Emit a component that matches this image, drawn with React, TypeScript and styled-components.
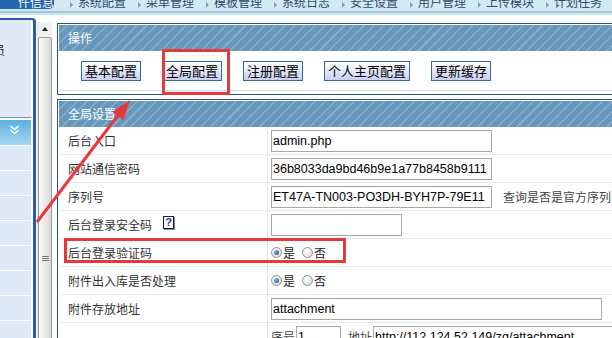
import React from 'react';
import styled, { createGlobalStyle, css } from 'styled-components';

const GlobalStyle = createGlobalStyle`
  html, body {
    margin: 0;
    padding: 0;
    background: #fff;
  }
  body {
    font-family: "Noto Sans CJK SC", "Liberation Sans", sans-serif;
  }
`;

const cjk = `"Noto Sans CJK SC", "Liberation Sans", sans-serif`;
const latin = `"Liberation Sans", Arial, sans-serif`;

const Page = styled.div`
  position: relative;
  width: 612px;
  height: 338px;
  overflow: hidden;
  background: #fff;
`;

const TopNav = styled.div`
  display: flex;
  height: 11px;
  background: #d5e9f2;
  border-bottom: 2px solid #9bcadf;
  overflow: hidden;
`;

const NavRule = styled.div`
  height: 2px;
  background: #cce5ef;
`;

const ActiveTab = styled.div`
  width: 54px;
  height: 9px;
  flex: none;
  background: #2467ae;
  border-bottom-right-radius: 5px;
  overflow: hidden;
  padding-left: 18px;
  box-sizing: border-box;
  color: #fff;
  font: 12px/12px ${cjk};
`;

const ClippedText = styled.div`
  margin-top: -4px;
  white-space: nowrap;
`;

const NavList = styled.div`
  display: flex;
  margin-left: 16px;
`;

const NavItem = styled.div`
  display: flex;
  align-items: flex-start;
  margin-right: 12px;
  color: #2d4c6b;
  font: 12px/12px ${cjk};
  white-space: nowrap;

  &::before {
    content: '';
    width: 0;
    height: 0;
    margin: 2px 5px 0 0;
    border-left: 3px solid #7d9db8;
    border-top: 3px solid transparent;
    border-bottom: 3px solid transparent;
  }
`;

const Body = styled.div`
  display: flex;
  align-items: flex-start;
`;

const Sidebar = styled.div`
  width: 36px;
  height: 330px;
  flex: none;
  margin-top: 3px;
  box-sizing: border-box;
  border-top: 2px solid #2a5ca8;
  border-right: 3px solid #2a5ca8;
  border-top-right-radius: 4px;
  padding-right: 2px;
  background: #fff;
`;

const SideTop = styled.div`
  height: 98px;
  padding-top: 23px;
  box-sizing: border-box;
  background: #dfeaf6;
  border-bottom: 1px solid #7396bd;
  overflow: hidden;
  font: 12px/14px ${cjk};
  color: #222;
`;

const SideTopText = styled.span`
  display: block;
  margin-left: -7px;
`;

const SideHeader = styled.div`
  height: 26px;
  margin-top: 2px;
  display: flex;
  align-items: flex-start;
  padding: 5px 0 0 9px;
  box-sizing: border-box;
  background: linear-gradient(#5cb1e3, #a6d6f1);
  border-bottom: 1px solid #fff;
`;

const SideRow = styled.div`
  height: 24px;
  background: #dde9f6;
  border-bottom: 1px solid #fff;
`;

const ScrollTrack = styled.div`
  width: 15px;
  height: 320px;
  flex: none;
  margin: 7px 0 0 1px;
  box-sizing: border-box;
  display: flex;
  flex-direction: column;
  background: #f1f1f1;
  border-left: 1px solid #e2e2e2;
`;

const ScrollUp = styled.div`
  height: 14px;
  flex: none;
  display: flex;
  align-items: center;
  justify-content: center;

  &::after {
    content: '';
    border-bottom: 4px solid #222;
    border-left: 3.5px solid transparent;
    border-right: 3.5px solid transparent;
  }
`;

const ScrollThumb = styled.div`
  flex: 1;
  margin: 1px 0 0 0;
  padding-top: 218px;
  box-sizing: border-box;
  border: 1px solid #9c9c9c;
  border-radius: 2px;
  background: linear-gradient(to right, #fbfbfb, #d9d9d9);
  display: flex;
  justify-content: center;
`;

const Grip = styled.div`
  width: 7px;
  height: 6px;
  background: repeating-linear-gradient(#7a7a7a 0 1px, transparent 1px 2px);
`;

const Main = styled.div`
  margin: 8px 0 0 5px;
  flex: none;
  width: 600px;
`;

const Panel = styled.div<{ $gap?: number }>`
  border: 1px solid #29557c;
  padding: 1px;
  background: #fff;
  margin-top: ${p => p.$gap ?? 0}px;
`;

const PanelHeader = styled.div`
  height: 26px;
  padding-left: 9px;
  color: #fff;
  font: 12px/26px ${cjk};
  background: repeating-linear-gradient(135deg, #6897bc 0 5.5px, #85adcc 5.5px 7px);
`;

const ButtonBar = styled.div`
  display: flex;
  padding: 10px 0 9px 22px;
  border-bottom: 1px solid #d6e3ec;
  margin-bottom: 2px;
`;

const ActionButton = styled.button`
  height: 20px;
  padding: 0 3px;
  margin-right: 21px;
  border: 1px solid #2f6b9c;
  border-radius: 0;
  background: linear-gradient(#ffffff, #c9cff1);
  color: #000;
  font: 13px/18px ${cjk};
  white-space: nowrap;
`;

const Row = styled.div`
  display: flex;
  height: 27px;
  border-bottom: 1px solid #e9e9e9;
`;

const LabelCell = styled.div`
  width: 209px;
  flex: none;
  display: flex;
  align-items: center;
  padding-left: 9px;
  box-sizing: border-box;
  border-right: 1px solid #e4e4e4;
  color: #333;
  font: 12px/14px ${cjk};
`;

const ValueCell = styled.div`
  flex: 1;
  display: flex;
  align-items: center;
  padding-left: 3px;
  color: #333;
  font: 12px/14px ${cjk};
`;

const TextField = styled.input<{ $w: number }>`
  width: ${p => p.$w}px;
  height: 22px;
  box-sizing: border-box;
  margin: 0;
  padding: 0 1px;
  border: 1px solid #a8a8a8;
  border-radius: 0;
  outline: none;
  background: #fff;
  color: #000;
  font: 12.5px ${latin};
`;

const Note = styled.span`
  margin-left: 11px;
  color: #444;
  white-space: nowrap;
`;

const HelpIcon = styled.span`
  display: inline-flex;
  align-items: center;
  justify-content: center;
  width: 11px;
  height: 13px;
  margin: -4px 0 0 11px;
  box-sizing: border-box;
  border: 1px solid #1c1c1c;
  box-shadow: 1px 1px 0 #8a8a8a;
  background: #fff;
  color: #1533c9;
  font: bold 11px/1 ${latin};
`;

const RadioDot = styled.span<{ $checked?: boolean }>`
  position: relative;
  width: 11px;
  height: 11px;
  flex: none;
  box-sizing: border-box;
  border: 1px solid #8c98a8;
  border-radius: 50%;
  background: radial-gradient(circle at 40% 35%, #ffffff, #d2d2d2);
  ${p =>
    p.$checked &&
    css`
      &::after {
        content: '';
        position: absolute;
        left: 2px;
        top: 2px;
        width: 5px;
        height: 5px;
        border-radius: 50%;
        background: radial-gradient(circle at 35% 35%, #86b0de, #1d4c8c);
      }
    `}
`;

const RadioLabel = styled.span<{ $last?: boolean }>`
  margin: 0 ${p => (p.$last ? 0 : 7)}px 0 1px;
  color: #222;
`;

const InlineLabel = styled.span`
  margin-right: 1px;
  color: #444;
  white-space: nowrap;
`;

const SpacedLabel = styled(InlineLabel)`
  margin-left: 7px;
`;

const Annotation = styled.div<{ $x: number; $y: number; $w: number; $h: number }>`
  position: absolute;
  left: ${p => p.$x}px;
  top: ${p => p.$y}px;
  width: ${p => p.$w}px;
  height: ${p => p.$h}px;
  box-sizing: border-box;
  border: 3px solid #e6393c;
  pointer-events: none;
`;

const ArrowLayer = styled.svg`
  position: absolute;
  left: 0;
  top: 0;
  pointer-events: none;
`;

const navItems = ['系统配置', '菜单管理', '模板管理', '系统日志', '安全设置', '用户管理', '上传模块', '计划任务'];
const actions = ['基本配置', '全局配置', '注册配置', '个人主页配置', '更新缓存'];

const Radios = () => (
  <>
    <RadioDot $checked />
    <RadioLabel>是</RadioLabel>
    <RadioDot />
    <RadioLabel $last>否</RadioLabel>
  </>
);

const App = () => {
  return (
    <Page>
      <GlobalStyle />
      <TopNav>
        <ActiveTab>
          <ClippedText>件信息</ClippedText>
        </ActiveTab>
        <NavList>
          {navItems.map(item => (
            <NavItem key={item}>
              <ClippedText>{item}</ClippedText>
            </NavItem>
          ))}
        </NavList>
      </TopNav>
      <NavRule />
      <Body>
        <Sidebar>
          <SideTop>
            <SideTopText>员</SideTopText>
          </SideTop>
          <SideHeader>
            <svg width="11" height="10" viewBox="0 0 11 10">
              <polyline points="1.5,1 5.5,4.5 9.5,1" fill="none" stroke="#fff" strokeWidth="1.6" />
              <polyline points="1.5,5 5.5,8.5 9.5,5" fill="none" stroke="#fff" strokeWidth="1.6" />
            </svg>
          </SideHeader>
          {Array.from({ length: 8 }).map((_, i) => (
            <SideRow key={i} />
          ))}
        </Sidebar>
        <ScrollTrack>
          <ScrollUp />
          <ScrollThumb>
            <Grip />
          </ScrollThumb>
        </ScrollTrack>
        <Main>
          <Panel>
            <PanelHeader>操作</PanelHeader>
            <ButtonBar>
              {actions.map(a => (
                <ActionButton key={a}>{a}</ActionButton>
              ))}
            </ButtonBar>
          </Panel>
          <Panel $gap={4}>
            <PanelHeader>全局设置</PanelHeader>
            <Row>
              <LabelCell>后台入口</LabelCell>
              <ValueCell>
                <TextField $w={221} value="admin.php" readOnly />
              </ValueCell>
            </Row>
            <Row>
              <LabelCell>网站通信密码</LabelCell>
              <ValueCell>
                <TextField $w={221} value="36b8033da9bd46b9e1a77b8458b9111" readOnly />
              </ValueCell>
            </Row>
            <Row>
              <LabelCell>序列号</LabelCell>
              <ValueCell>
                <TextField $w={221} value="ET47A-TN003-PO3DH-BYH7P-79E11" readOnly />
                <Note>查询是否是官方序列号</Note>
              </ValueCell>
            </Row>
            <Row>
              <LabelCell>
                后台登录安全码
                <HelpIcon>?</HelpIcon>
              </LabelCell>
              <ValueCell>
                <TextField $w={131} value="" readOnly />
              </ValueCell>
            </Row>
            <Row>
              <LabelCell>后台登录验证码</LabelCell>
              <ValueCell>
                <Radios />
              </ValueCell>
            </Row>
            <Row>
              <LabelCell>附件出入库是否处理</LabelCell>
              <ValueCell>
                <Radios />
              </ValueCell>
            </Row>
            <Row>
              <LabelCell>附件存放地址</LabelCell>
              <ValueCell>
                <TextField $w={331} value="attachment" readOnly />
              </ValueCell>
            </Row>
            <Row>
              <LabelCell />
              <ValueCell>
                <InlineLabel>序号</InlineLabel>
                <TextField $w={45} value="1" readOnly />
                <SpacedLabel>地址</SpacedLabel>
                <TextField $w={260} value="http://112.124.52.149/zg/attachment" readOnly />
              </ValueCell>
            </Row>
          </Panel>
        </Main>
      </Body>

      <Annotation $x={162} $y={49} $w={68} $h={46} />
      <Annotation $x={64} $y={238} $w={282} $h={25} />
      <ArrowLayer width="612" height="338" viewBox="0 0 612 338">
        <line x1="37" y1="222" x2="119" y2="114" stroke="#e6393c" strokeWidth="3" />
        <polygon points="130,100 123.5,120 112.3,111.7" fill="#e6393c" />
      </ArrowLayer>
    </Page>
  );
};

export default App;
